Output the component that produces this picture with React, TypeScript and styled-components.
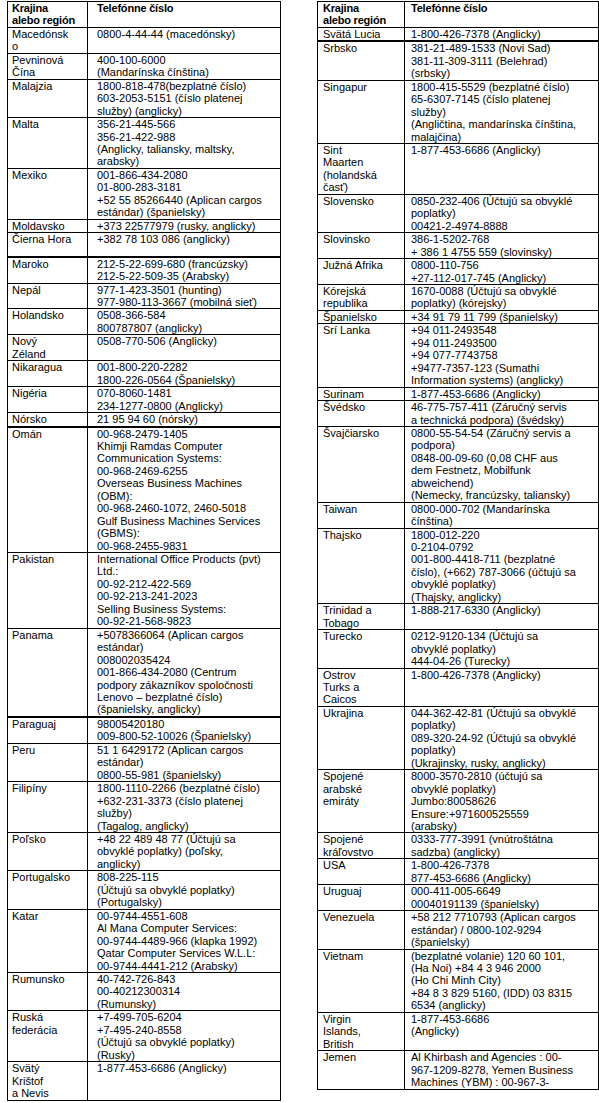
import React from "react";
import styled, { createGlobalStyle } from "styled-components";

const Global = createGlobalStyle`
  html, body { margin: 0; padding: 0; background: #fff; }
  body { font-family: "Liberation Sans", Arial, sans-serif; color: #000; }
`;

type Row = { c: string[]; p: string[]; thick?: boolean };

const left: Row[] = [
  { c: ["Macedónsk", "o"], p: ["0800-4-44-44 (macedónsky)"] },
  { c: ["Pevninová", "Čína"], p: ["400-100-6000", "(Mandarínska čínština)"] },
  { c: ["Malajzia"], p: ["1800-818-478(bezplatné číslo)", "603-2053-5151 (číslo platenej", "služby) (anglicky)"] },
  { c: ["Malta"], p: ["356-21-445-566", "356-21-422-988", "(Anglicky, taliansky, maltsky,", "arabsky)"] },
  { c: ["Mexiko"], p: ["001-866-434-2080", "01-800-283-3181", "+52 55 85266440 (Aplican cargos", "estándar) (španielsky)"] },
  { c: ["Moldavsko"], p: ["+373 22577979 (rusky, anglicky)"] },
  { c: ["Čierna Hora"], p: ["+382 78 103 086 (anglicky)", ""], thick: true },
  { c: ["Maroko"], p: ["212-5-22-699-680 (francúzsky)", "212-5-22-509-35 (Arabsky)"] },
  { c: ["Nepál"], p: ["977-1-423-3501 (hunting)", "977-980-113-3667 (mobilná sieť)"] },
  { c: ["Holandsko"], p: ["0508-366-584", "800787807 (anglicky)"] },
  { c: ["Nový", "Zéland"], p: ["0508-770-506 (Anglicky)"] },
  { c: ["Nikaragua"], p: ["001-800-220-2282", "1800-226-0564 (Španielsky)"] },
  { c: ["Nigéria"], p: ["070-8060-1481", "234-1277-0800 (Anglicky)"] },
  { c: ["Nórsko"], p: ["21 95 94 60 (nórsky)"], thick: true },
  {
    c: ["Omán"],
    p: [
      "00-968-2479-1405",
      "Khimji Ramdas Computer",
      "Communication Systems:",
      "00-968-2469-6255",
      "Overseas Business Machines",
      "(OBM):",
      "00-968-2460-1072, 2460-5018",
      "Gulf Business Machines Services",
      "(GBMS):",
      "00-968-2455-9831",
    ],
  },
  {
    c: ["Pakistan"],
    p: [
      "International Office Products (pvt)",
      "Ltd.:",
      "00-92-212-422-569",
      "00-92-213-241-2023",
      "Selling Business Systems:",
      "00-92-21-568-9823",
    ],
  },
  {
    c: ["Panama"],
    p: [
      "+5078366064 (Aplican cargos",
      "estándar)",
      "008002035424",
      "001-866-434-2080 (Centrum",
      "podpory zákazníkov spoločnosti",
      "Lenovo – bezplatné číslo)",
      "(španielsky, anglicky)",
    ],
    thick: true,
  },
  { c: ["Paraguaj"], p: ["98005420180", "009-800-52-10026 (Španielsky)"] },
  { c: ["Peru"], p: ["51 1 6429172 (Aplican cargos", "estándar)", "0800-55-981 (španielsky)"] },
  { c: ["Filipíny"], p: ["1800-1110-2266 (bezplatné číslo)", "+632-231-3373 (číslo platenej", "služby)", "(Tagalog, anglicky)"] },
  { c: ["Poľsko"], p: ["+48 22 489 48 77 (Účtujú sa", "obvyklé poplatky) (poľsky,", "anglicky)"] },
  { c: ["Portugalsko"], p: ["808-225-115", "(Účtujú sa obvyklé poplatky)", "(Portugalsky)"] },
  {
    c: ["Katar"],
    p: [
      "00-9744-4551-608",
      "Al Mana Computer Services:",
      "00-9744-4489-966 (klapka 1992)",
      "Qatar Computer Services W.L.L:",
      "00-9744-4441-212 (Arabsky)",
    ],
  },
  { c: ["Rumunsko"], p: ["40-742-726-843", "00-40212300314", "(Rumunsky)"] },
  { c: ["Ruská", "federácia"], p: ["+7-499-705-6204", "+7-495-240-8558", "(Účtujú sa obvyklé poplatky)", "(Rusky)"] },
  { c: ["Svätý", "Krištof", "a Nevis"], p: ["1-877-453-6686 (Anglicky)"] },
];

const right: Row[] = [
  { c: ["Svätá Lucia"], p: ["1-800-426-7378 (Anglicky)"], thick: true },
  { c: ["Srbsko"], p: ["381-21-489-1533 (Novi Sad)", "381-11-309-3111 (Belehrad)", "(srbsky)"] },
  {
    c: ["Singapur"],
    p: [
      "1800-415-5529 (bezplatné číslo)",
      "65-6307-7145 (číslo platenej",
      "služby)",
      "(Angličtina, mandarínska čínština,",
      "malajčina)",
    ],
  },
  { c: ["Sint", "Maarten", "(holandská", "časť)"], p: ["1-877-453-6686 (Anglicky)"] },
  { c: ["Slovensko"], p: ["0850-232-406 (Účtujú sa obvyklé", "poplatky)", "00421-2-4974-8888"] },
  { c: ["Slovinsko"], p: ["386-1-5202-768", "+ 386 1 4755 559 (slovinsky)"] },
  { c: ["Južná Afrika"], p: ["0800-110-756", "+27-112-017-745 (Anglicky)"] },
  { c: ["Kórejská", "republika"], p: ["1670-0088 (Účtujú sa obvyklé", "poplatky) (kórejsky)"] },
  { c: ["Španielsko"], p: ["+34 91 79 11 799 (španielsky)"] },
  {
    c: ["Srí Lanka"],
    p: ["+94 011-2493548", "+94 011-2493500", "+94 077-7743758", "+9477-7357-123 (Sumathi", "Information systems) (anglicky)"],
  },
  { c: ["Surinam"], p: ["1-877-453-6686 (Anglicky)"] },
  { c: ["Švédsko"], p: ["46-775-757-411 (Záručný servis", "a technická podpora) (švédsky)"] },
  {
    c: ["Švajčiarsko"],
    p: [
      "0800-55-54-54 (Záručný servis a",
      "podpora)",
      "0848-00-09-60 (0,08 CHF aus",
      "dem Festnetz, Mobilfunk",
      "abweichend)",
      "(Nemecky, francúzsky, taliansky)",
    ],
  },
  { c: ["Taiwan"], p: ["0800-000-702 (Mandarínska", "čínština)"] },
  {
    c: ["Thajsko"],
    p: [
      "1800-012-220",
      "0-2104-0792",
      "001-800-4418-711 (bezplatné",
      "číslo), (+662) 787-3066 (účtujú sa",
      "obvyklé poplatky)",
      "(Thajsky, anglicky)",
    ],
  },
  { c: ["Trinidad a", "Tobago"], p: ["1-888-217-6330 (Anglicky)"] },
  { c: ["Turecko"], p: ["0212-9120-134 (Účtujú sa", "obvyklé poplatky)", "444-04-26 (Turecky)"] },
  { c: ["Ostrov", "Turks a", "Caicos"], p: ["1-800-426-7378 (Anglicky)"] },
  {
    c: ["Ukrajina"],
    p: [
      "044-362-42-81 (Účtujú sa obvyklé",
      "poplatky)",
      "089-320-24-92 (Účtujú sa obvyklé",
      "poplatky)",
      "(Ukrajinsky, rusky, anglicky)",
    ],
  },
  {
    c: ["Spojené", "arabské", "emiráty"],
    p: ["8000-3570-2810 (účtujú sa", "obvyklé poplatky)", "Jumbo:80058626", "Ensure:+971600525559", "(arabsky)"],
  },
  { c: ["Spojené", "kráľovstvo"], p: ["0333-777-3991 (vnútroštátna", "sadzba) (anglicky)"] },
  { c: ["USA"], p: ["1-800-426-7378", "877-453-6686 (Anglicky)"] },
  { c: ["Uruguaj"], p: ["000-411-005-6649", "00040191139 (španielsky)"] },
  { c: ["Venezuela"], p: ["+58 212 7710793 (Aplican cargos", "estándar) / 0800-102-9294", "(španielsky)"] },
  {
    c: ["Vietnam"],
    p: [
      "(bezplatné volanie) 120 60 101,",
      "(Ha Noi) +84 4 3 946 2000",
      "(Ho Chi Minh City)",
      "+84 8 3 829 5160, (IDD) 03 8315",
      "6534 (anglicky)",
    ],
  },
  { c: ["Virgin", "Islands,", "British"], p: ["1-877-453-6686", "(Anglicky)"] },
  {
    c: ["Jemen"],
    p: ["Al Khirbash and Agencies : 00-", "967-1209-8278, Yemen Business", "Machines (YBM) : 00-967-3-"],
  },
];

const Page = styled.div`
  display: flex;
  align-items: flex-start;
  gap: 36px;
  padding: 1px 0 0 7px;
  width: 599px;
  box-sizing: border-box;
`;

const Table = styled.table`
  border-collapse: collapse;
  table-layout: fixed;
  font-size: 11px;
  line-height: 12.45px;
`;

const Tr = styled.tr<{ $thick?: boolean }>`
  & > td,
  & > th {
    border-bottom: ${(p) => (p.$thick ? "2px" : "1px")} solid #000;
  }
`;

const Cell = styled.td<{ $pad: number }>`
  border: 1px solid #000;
  padding: 0 0 0 ${(p) => p.$pad}px;
  vertical-align: top;
  text-align: left;
  white-space: nowrap;
  overflow: hidden;
`;

const HeadCell = styled(Cell).attrs({ as: "th" })`
  font-weight: bold;
  letter-spacing: -0.2px;
`;

const Line = styled.span<{ $empty?: boolean }>`
  display: block;
  height: ${(p) => (p.$empty ? "10px" : "auto")};
`;

const Lines = ({ items }: { items: string[] }) => (
  <>
    {items.map((t, i) => (
      <Line key={i} $empty={t === ""}>
        {t === "" ? "" : t}
      </Line>
    ))}
  </>
);

type Spec = { rows: Row[]; w1: number; w2: number; p1: number; p2: number };

const ContactTable = ({ rows, w1, w2, p1, p2 }: Spec) => (
  <Table style={{ width: w1 + w2 }}>
    <colgroup>
      <col style={{ width: w1 }} />
      <col style={{ width: w2 }} />
    </colgroup>
    <thead>
      <Tr>
        <HeadCell $pad={p1}>
          <Lines items={["Krajina", "alebo región"]} />
        </HeadCell>
        <HeadCell $pad={p2}>
          <Lines items={["Telefónne číslo"]} />
        </HeadCell>
      </Tr>
    </thead>
    <tbody>
      {rows.map((r, i) => (
        <Tr key={i} $thick={r.thick}>
          <Cell $pad={p1}>
            <Lines items={r.c} />
          </Cell>
          <Cell $pad={p2}>
            <Lines items={r.p} />
          </Cell>
        </Tr>
      ))}
    </tbody>
  </Table>
);

export default function App() {
  return (
    <>
      <Global />
      <Page>
        <ContactTable rows={left} w1={80} w2={193} p1={4} p2={9} />
        <ContactTable rows={right} w1={87} w2={194} p1={5} p2={6} />
      </Page>
    </>
  );
}
